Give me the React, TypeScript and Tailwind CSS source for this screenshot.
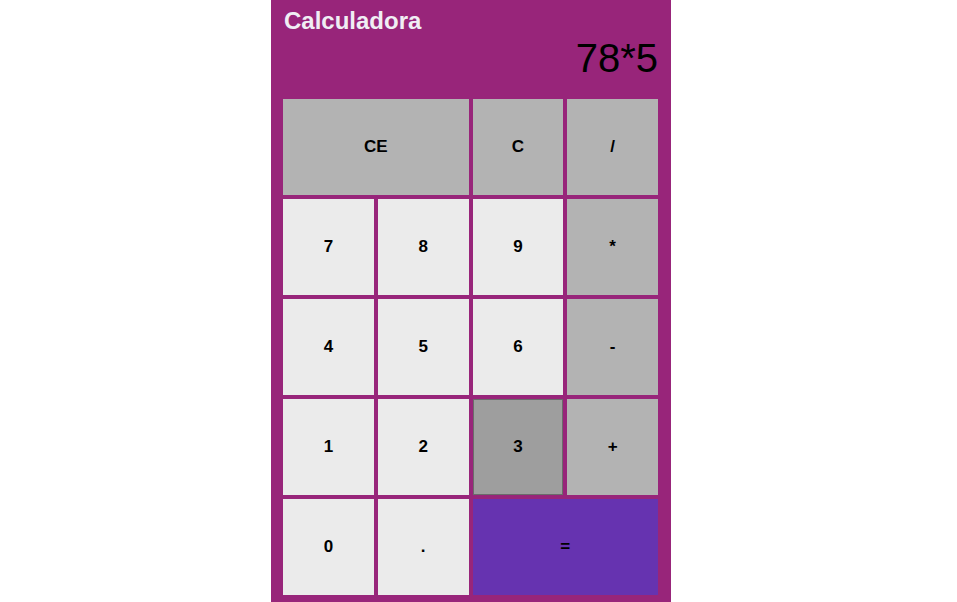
import React from "react";

type K = { label: string; cls: string; span?: number };

const light = "bg-[#ebebeb]";
const gray = "bg-[#b3b3b3]";

const keys: K[] = [
  { label: "CE", cls: gray, span: 2 },
  { label: "C", cls: gray },
  { label: "/", cls: gray },
  { label: "7", cls: light },
  { label: "8", cls: light },
  { label: "9", cls: light },
  { label: "*", cls: gray },
  { label: "4", cls: light },
  { label: "5", cls: light },
  { label: "6", cls: light },
  { label: "-", cls: gray },
  { label: "1", cls: light },
  { label: "2", cls: light },
  { label: "3", cls: "bg-[#9e9e9e] border border-[#6b6b6b]" },
  { label: "+", cls: gray },
  { label: "0", cls: light },
  { label: ".", cls: light },
  { label: "=", cls: "bg-[#6633b0]", span: 2 },
];

export default function App() {
  return (
    <div className="w-full min-h-[602px] bg-white flex justify-center font-['Liberation_Sans',Arial,sans-serif]">
      <div className="w-[400px] bg-[#98257a] pt-[7px] pl-[12px] pr-[13px] pb-[12px] ml-[-15px]">
        <h1 className="text-[24px] leading-[28px] font-bold text-[#f0eef4] pl-[1px]">Calculadora</h1>
        <div className="text-[40px] leading-[46px] text-black text-right">78*5</div>
        <div className="mt-[18px] grid grid-cols-4 gap-[4px]">
          {keys.map((k) => (
            <button
              key={k.label}
              className={`${k.cls} ${k.span === 2 ? "col-span-2" : ""} h-[96px] flex items-center justify-center text-[17px] font-bold text-black`}
            >
              {k.label}
            </button>
          ))}
        </div>
      </div>
    </div>
  );
}
